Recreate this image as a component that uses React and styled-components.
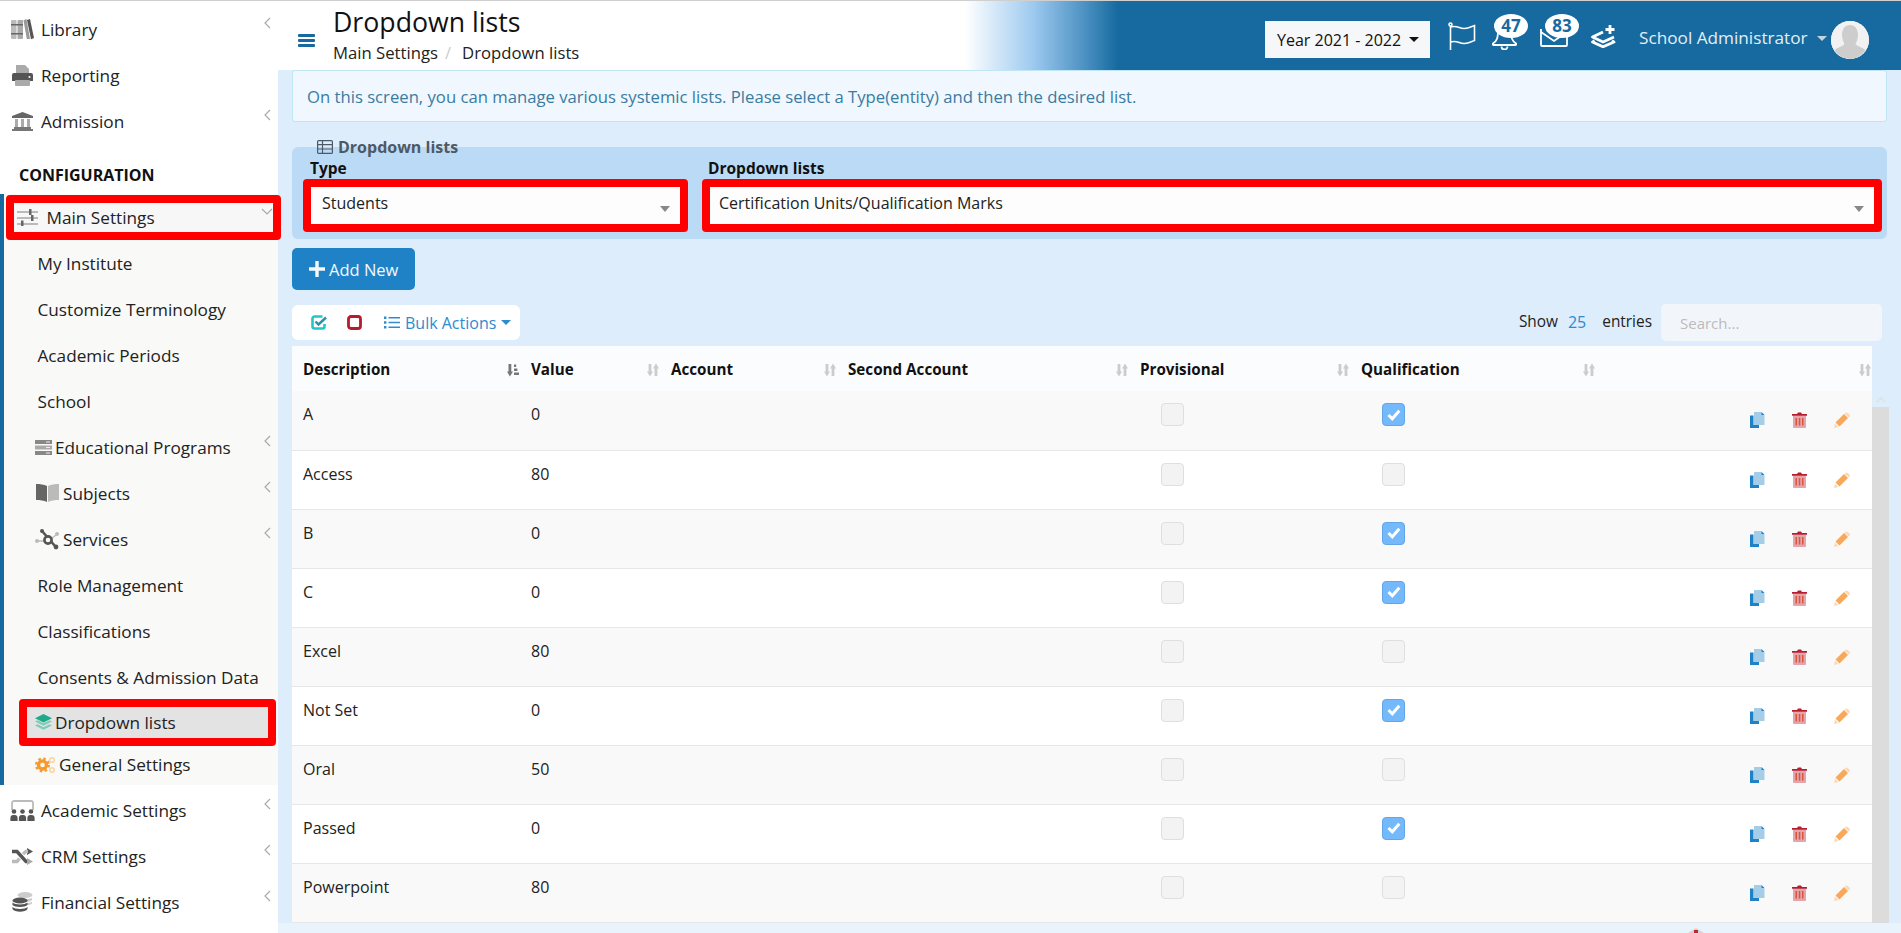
import React from 'react';
import styled, { createGlobalStyle } from 'styled-components';

const Global = createGlobalStyle`
  html, body { margin: 0; padding: 0; height: 933px; overflow: hidden; background: #fff; }
  body { font-family: "Open Sans", "Liberation Sans", sans-serif; font-size: 17px; color: #222; }
  * { box-sizing: border-box; }
`;

const Page = styled.div`
  display: grid; grid-template-columns: 278px 1fr; height: 933px; border-top: 1px solid #cfcfcf; overflow: hidden;
`;

/* ---------- sidebar ---------- */
const Sidebar = styled.aside`
  background: #fff; padding-top: 5px; display: flex; flex-direction: column; position: relative; z-index: 2;
`;
const NavRow = styled.div`
  position: relative; display: flex; align-items: center; flex: none;
  height: ${p => p.$h || 46}px; padding-left: ${p => p.$indent}px; color: #222; font-size: 17.2px; white-space: nowrap;
  background: ${p => p.$bg || 'transparent'};
  ${p => p.$mark && `
    &::after {
      content: ''; position: absolute; left: ${p.$mark[0]}px; right: ${p.$mark[1]}px; top: ${p.$mark[2]}px; bottom: ${p.$mark[3]}px;
      border: 8px solid #ff0000; border-radius: 4px; pointer-events: none; background: ${p.$fill || 'transparent'};
    }
  `}
`;
const IconSlot = styled.span`
  display: inline-flex; align-items: center; flex: none; width: ${p => p.$w}px; position: relative; z-index: 1;
`;
const NavLabel = styled.span`position: relative; z-index: 1;`;
const Chevron = styled.svg`
  position: absolute; right: 6px; top: ${p => p.$top || 11}px; width: 9px; height: 12px; fill: none; stroke: #aaa; stroke-width: 1.2;
`;
const ChevronWide = styled(Chevron)`width: 12px; right: 5px; z-index: 1;`;
const SectionTitle = styled.div`
  height: 50px; padding: 19px 0 0 19px; font-weight: 700; font-size: 16px; line-height: 24px; color: #111;
`;
const SubGroup = styled.div`
  border-left: 4px solid #166a9f; background: #f9f9f7; margin-bottom: 2px;
`;

/* ---------- main column ---------- */
const Main = styled.main`
  display: flex; flex-direction: column; min-width: 0; background: #deedfb;
`;
const Header = styled.header`
  height: 69px; flex: none; display: flex; align-items: stretch; padding-left: 20px;
  background: linear-gradient(90deg, #fff 0, #fff 687px, #9fcbf0 754px, #4f93c4 805px, #166a9f 840px);
`;
const Burger = styled.div`
  display: flex; flex-direction: column; justify-content: space-between; width: 17px; height: 13px; margin: 33px 18px 0 0; flex: none;
  span { display: block; height: 2.6px; background: #166a9f; border-radius: 1px; }
`;
const TitleBlock = styled.div`flex: 1; min-width: 0;`;
const PageTitle = styled.h1`
  margin: 3px 0 0; font-size: 26.7px; line-height: 36px; font-weight: 400; color: #111;
`;
const Crumbs = styled.div`
  display: flex; align-items: center; font-size: 16.7px; line-height: 24px; margin-top: 1px; color: #222;
  i { font-style: normal; color: #ccc; margin: 0 11px 0 7px; }
`;
const HeaderTools = styled.div`
  display: flex; align-items: flex-start; padding-right: 32px; position: relative; flex: none;
`;
const YearSelect = styled.div`
  margin-top: 20px; width: 165px; height: 37px; background: #f6f7f9; color: #111; font-size: 16px;
  display: flex; align-items: center; padding-left: 12px; gap: 8px; white-space: nowrap;
`;
const Caret = styled.span`
  display: inline-block; width: 0; height: 0; flex: none;
  border-left: ${p => p.$s || 5}px solid transparent; border-right: ${p => p.$s || 5}px solid transparent;
  border-top: ${p => p.$s || 5}px solid ${p => p.$c || '#111'};
`;
const ToolIcon = styled.div`
  position: relative; flex: none; margin-top: ${p => p.$top}px; margin-left: ${p => p.$left}px; width: ${p => p.$w}px; height: ${p => p.$h}px;
  svg { display: block; }
`;
const Badge = styled.span`
  position: absolute; left: ${p => p.$left}px; top: ${p => p.$top}px; width: 34px; height: 24px; border-radius: 50%;
  background: #fff; color: #166a9f; font-weight: 700; font-size: 17px; line-height: 24px; text-align: center;
`;
const UserName = styled.div`
  margin: 25px 0 0 22px; color: #e4eef5; font-size: 17.2px; line-height: 24px; white-space: nowrap; width: 171px; flex: none;
`;
const UserCaret = styled.div`display: flex; margin: 35px 4px 0 7px; flex: none;`;
const Avatar = styled.div`
  width: 38px; height: 38px; margin-top: 20px; border-radius: 50%; overflow: hidden; flex: none; background: #f0f0f0;
  svg { display: block; }
`;

const Content = styled.div`
  flex: 1; min-height: 0; padding: 0 14px;
`;
const Alert = styled.div`
  height: 52px; background: #f0f7fe; border: 1px solid #bfe6f2; border-radius: 3px; padding: 0 14px;
  display: flex; align-items: center; color: #3a7ba1; font-size: 16.68px; white-space: nowrap;
`;
const Panel = styled.section`
  position: relative; margin-top: 25px; height: 92px; background: #bbdaf5; border-radius: 6px;
  display: flex; gap: 30px; padding: 11px 13px 15px 19px;
`;
const Legend = styled.div`
  position: absolute; left: 25px; top: -12px; display: flex; align-items: center; gap: 5px;
  font-size: 16px; font-weight: 700; line-height: 24px; color: #4d5a66;
`;
const Field = styled.div`
  flex: ${p => p.$grow ? '1' : 'none'}; width: ${p => p.$w ? p.$w + 'px' : 'auto'};
  display: flex; flex-direction: column;
`;
const FieldLabel = styled.label`
  display: block; height: 20px; margin: 0 0 9px ${p => p.$shift}px; font-weight: 700; font-size: 15.5px; line-height: 20px; color: #111;
`;
const SelectBox = styled.div`
  position: relative; height: 37px; background: #fdfdfd; padding: 4px ${p => p.$pad}px; font-size: 16px; line-height: 24px; color: #222;
  &::before { content: ''; position: absolute; left: -8px; right: -8px; top: -8px; bottom: -8px; border: 8px solid #ff0000; border-radius: 4px; }
  &::after { content: ''; position: absolute; right: 10px; top: 19px; border-left: 5px solid transparent; border-right: 5px solid transparent; border-top: 6px solid #888; }
`;
const AddButton = styled.button`
  display: flex; align-items: center; gap: 4px; margin-top: 9px; width: 123px; height: 42px; padding: 0 0 0 17px;
  border: 0; border-radius: 5px; background: #1f82c7; color: #f4f8fb; font: inherit; font-size: 16.5px;
`;
const ToolRow = styled.div`
  display: flex; justify-content: space-between; align-items: center; margin-top: 14px; height: 37px; padding-right: 5px;
`;
const BulkBar = styled.div`
  width: 228px; height: 35px; background: #fff; border-radius: 6px; display: flex; align-items: center; padding-left: 19px;
`;
const BulkLabel = styled.span`
  display: inline-flex; align-items: center; gap: 5px; margin-left: 22px; color: #2d8bd0; font-size: 16px; white-space: nowrap;
`;
const BulkStop = styled.span`display: inline-flex; margin-left: 20px;`;
const Entries = styled.div`
  display: flex; align-items: center; font-size: 15.4px; color: #222;
`;
const EntryText = styled.span`margin-bottom: 2px;`;
const EntryCount = styled.span`color: #2d8bd0; margin: 0 16px 2px 10px; font-size: 16px;`;
const SearchBox = styled.div`
  width: 221px; height: 37px; margin-left: 9px; padding: 0 19px; background: #f2f6fa; border-radius: 5px;
  display: flex; align-items: center; color: #bbb; font-size: 15px;
`;
const TableRow = styled.div`
  display: flex; align-items: flex-start; margin-top: 5px; margin-right: -2px;
`;
const Table = styled.table`
  width: 1580px; flex: none; table-layout: fixed; border-collapse: collapse;
`;
const Th = styled.th`
  width: ${p => p.$w}px; height: 45px; padding: 0 1px 0 11px; background: #fbfcfe; text-align: left; vertical-align: middle;
`;
const ThInner = styled.div`
  display: flex; justify-content: space-between; align-items: center; font-size: 15.2px; font-weight: 700; color: #111;
  svg { flex: none; margin-top: 2px; }
`;
const Tr = styled.tr`
  background: ${p => p.$odd ? '#f9f9f9' : '#fff'};
`;
const Td = styled.td`
  height: 59px; padding: 11px; vertical-align: top; border-bottom: 1.5px solid #e7e7e7; font-size: 16px; line-height: 24px; color: #222;
`;
const CheckTd = styled(Td)`padding: 12px 0 0 32px;`;
const Check = styled.span`
  display: flex; align-items: center; justify-content: center; width: 23px; height: 23px; border-radius: 4px;
  background: ${p => p.$on ? '#74b9fb' : '#f3f3f3'}; border: 1px solid ${p => p.$on ? '#62a6e8' : '#dfdfdf'};
`;
const ActionTd = styled(Td)`padding: 21px 0 0 154px;`;
const Actions = styled.div`
  display: flex; align-items: flex-start; gap: 27px;
  svg { display: block; flex: none; }
`;
const ScrollTrack = styled.div`
  width: 17px; flex: none; margin-top: 45px; height: 532px; display: flex; flex-direction: column;
`;
const ScrollUp = styled.div`
  height: 16px; display: flex; align-items: center; justify-content: center;
`;
const ScrollThumb = styled.div`flex: 1; background: #dcdcdc;`;
const Strip = styled.div`
  position: relative; height: 10px; flex: none; background: #e9f3fb;
`;
const StripMark = styled.svg`
  position: absolute; left: 1410px; top: 5px; width: 16px; height: 5px;
`;

/* ---------- icons ---------- */
const Ic = ({ w, h, children, ...r }) => <svg width={w} height={h} viewBox={`0 0 ${w} ${h}`} {...r}>{children}</svg>;

const Library = () => (
  <Ic w={23} h={21}>
    <rect x="0" y="1" width="5.500" height="19" rx="1" fill="#bbb" />
    <rect x="6.500" y="1" width="5.500" height="19" rx="1" fill="#aaa" />
    <path d="M0 5h12v1.600H0zM0 14h12v1.600H0z" fill="#666" />
    <path d="M12.500 1.200L15.500 0l3.500 20h-3.200z" fill="#999" />
    <path d="M16 1l3-1 4 19-3 1.200z" fill="#555" />
  </Ic>
);
const Printer = () => (
  <Ic w={21} h={21}>
    <path d="M4 0h9l4 4v5H4z" fill="#aaa" />
    <path d="M2 8h17a2 2 0 0 1 2 2v6H0v-6a2 2 0 0 1 2-2z" fill="#555" />
    <rect x="3" y="15" width="15" height="6" rx="1" fill="#aaa" />
    <circle cx="17.500" cy="12" r="1" fill="#fff" />
  </Ic>
);
const Bank = () => (
  <Ic w={21} h={19}>
    <path d="M10.500 0L21 4v2H0V4z" fill="#666" />
    <path d="M3 7h3v8H3zM9 7h3v8H9zM15 7h3v8h-3z" fill="#aaa" />
    <path d="M2 15h17v2H2zM0 17h21v2H0z" fill="#777" />
  </Ic>
);
const Sliders = () => (
  <Ic w={21} h={17}>
    <path d="M0 2h21v2H0zM0 8h21v2H0zM0 14h21v2H0z" fill="#bbb" />
    <path d="M12 0h2.500v6H12zM14 6h2.500v6H14zM4 11.500h2.500v5.500H4z" fill="#666" />
  </Ic>
);
const Server = () => (
  <Ic w={17} h={15}>
    <rect y="0" width="17" height="4" fill="#888" /><rect y="5.500" width="17" height="4" fill="#aaa" /><rect y="11" width="17" height="4" fill="#888" />
    <path d="M11 1.500h4v1h-4zM11 7h4v1h-4zM11 12.500h4v1h-4z" fill="#eee" />
  </Ic>
);
const Book = () => (
  <Ic w={23} h={18}>
    <path d="M0 0c4 0 8 .5 11 2v16c-3-1.500-7-2-11-2z" fill="#666" />
    <path d="M12 2c3-1.500 7-2 11-2v16c-4 0-8 .5-11 2z" fill="#bbb" />
  </Ic>
);
const Services = () => (
  <Ic w={25} h={21}>
    <circle cx="2" cy="12" r="2" fill="#bbb" /><circle cx="22" cy="5" r="2" fill="#bbb" />
    <path d="M7 2l13 15" stroke="#555" strokeWidth="2.600" />
    <path d="M3 12h6M16 10l5-4" stroke="#bbb" strokeWidth="1.400" />
    <circle cx="7" cy="2" r="2" fill="#555" /><circle cx="21" cy="18" r="2.400" fill="#555" />
    <circle cx="13" cy="11" r="3.600" fill="#f9f9f7" stroke="#555" strokeWidth="2.600" />
  </Ic>
);
const Layers = () => (
  <Ic w={17} h={16}>
    <path d="M8.500 0L17 4.300 8.500 8.600 0 4.300z" fill="#1fa98a" />
    <path d="M0 7.500l2.500-1.200 6 3 6-3L17 7.500 8.500 11.800z" fill="#7ccdb8" />
    <path d="M0 11.500l2.500-1.200 6 3 6-3 2.500 1.200L8.500 15.800z" fill="#7ccdb8" />
  </Ic>
);
const Cogs = () => (
  <Ic w={21} h={17}>
    <circle cx="7.500" cy="9" r="4" fill="none" stroke="#f79a2e" strokeWidth="3.400" />
    <circle cx="7.500" cy="9" r="6.300" fill="none" stroke="#f79a2e" strokeWidth="2.400" strokeDasharray="2.500 2.450" />
    <circle cx="17" cy="4" r="2.300" fill="none" stroke="#fbd5a5" strokeWidth="1.600" />
    <circle cx="17" cy="14" r="2.300" fill="none" stroke="#fbd5a5" strokeWidth="1.600" />
  </Ic>
);
const Group = () => (
  <Ic w={25} h={21}>
    <path d="M2 10V3a2 2 0 0 1 2-2h17a2 2 0 0 1 2 2v7" fill="none" stroke="#bbb" strokeWidth="1.800" />
    {[4, 12.5, 21].map(x => (
      <g key={x} fill="#555">
        <circle cx={x} cy="11.500" r="2.300" /><path d={`M${x - 3.6} 21v-3a3 3 0 0 1 3-3h1.200a3 3 0 0 1 3 3v3z`} />
      </g>
    ))}
  </Ic>
);
const Shuffle = () => (
  <Ic w={21} h={17}>
    <path d="M0 3.500h5l9 10h2" fill="none" stroke="#555" strokeWidth="3.400" />
    <path d="M15 0l6 3.500-6 3.500z" fill="#555" />
    <path d="M0 13.500h5l2.500-3M11 6l3-2.500h2" fill="none" stroke="#bbb" strokeWidth="3.400" />
    <path d="M15 10l6 3.500-6 3.500z" fill="#aaa" />
  </Ic>
);
const Coins = () => (
  <Ic w={21} h={20}>
    <ellipse cx="13" cy="3" rx="7.500" ry="3" fill="#ccc" />
    <path d="M6 6c2 1.500 12 1.500 14 0v2c-1 1.200-4 2-7 2zM13 11c3 0 6-.5 7-1.500v2c-1 1-3 1.500-5 1.500z" fill="#ccc" />
    <ellipse cx="8" cy="8.500" rx="7.500" ry="3" fill="#555" />
    <path d="M.5 10.500c2 2.500 13 2.500 15 0v2.500c-2 2.500-13 2.500-15 0zM.5 15c2 2.500 13 2.500 15 0v2c-2 3.500-13 3.500-15 0z" fill="#555" />
  </Ic>
);

const ChevLeft = ({ top }) => <Chevron $top={top} viewBox="0 0 9 12"><path d="M7 1L2 6l5 5" /></Chevron>;
const ChevDown = () => <ChevronWide $top={11} viewBox="0 0 12 12"><path d="M1 4l5 5 5-5" /></ChevronWide>;

const Flag = () => (
  <Ic w={28} h={28} fill="none" stroke="#fff" strokeWidth="1.600">
    <circle cx="2.500" cy="2.500" r="1.500" />
    <path d="M2.500 4v24M2.500 5c7-2 9 2 14 1.500 4-.3 7-2 10-3v15c-3 1-6 2.700-10 3-5 .5-7-3.500-14-1.500" />
  </Ic>
);
const Bell = () => (
  <Ic w={25} h={22} fill="none" stroke="#fff" strokeWidth="1.800">
    <path d="M6 2C6 10 5 13 1 15.500c-.6.6-.2 1.500.8 1.500h21.400c1 0 1.400-.9.800-1.500C20 13 19 10 19 2" />
    <path d="M9.500 18.500a3 3 0 0 0 6 0" />
  </Ic>
);
const Envelope = () => (
  <Ic w={28} h={19} fill="none" stroke="#fff" strokeWidth="1.800">
    <path d="M1 1v16a1 1 0 0 0 1 1h24a1 1 0 0 0 1-1V1" />
    <path d="M1 4l13 9 13-9" />
  </Ic>
);
const LayersPlus = () => (
  <Ic w={26} h={23} fill="none" stroke="#fff" strokeWidth="2.800">
    <path d="M19 0v9M14.500 4.500h9" />
    <path d="M12 7L1.500 12 12 17l11-5" strokeLinejoin="round" />
    <path d="M3.500 15.500L1.500 17 12 21.800 23 17l-2-1.500" strokeLinejoin="round" />
  </Ic>
);
const Person = () => (
  <svg width="38" height="38" viewBox="0 0 38 38">
    <rect width="38" height="38" fill="#f2f2f2" />
    <path d="M19 4c5 0 8 4 8 10 0 4-1.500 7-2.500 9 2 2.500 7 3.500 10 6-3 5-9 9-15.500 9S6.500 34 3.500 29c3-2.500 8-3.500 10-6-1-2-2.500-5-2.500-9 0-6 3-10 8-10z" fill="#cdcdcd" />
  </svg>
);
const TableGlyph = () => (
  <Ic w={16} h={14} fill="none" stroke="#4d5a66" strokeWidth="1.200">
    <rect x=".6" y=".6" width="14.800" height="12.800" rx="1" />
    <path d="M.6 4.700h14.800M.6 9h14.800M5.500 .6v12.800" />
  </Ic>
);
const Plus = () => (
  <Ic w={16} h={16}><path d="M6.300 0h3.400v6.300H16v3.400H9.700V16H6.300V9.700H0V6.300h6.300z" fill="#f4f8fb" /></Ic>
);
const CheckSquare = () => (
  <Ic w={16} h={15} fill="none">
    <path d="M13.500 9v2.500a2 2 0 0 1-2 2h-8a2 2 0 0 1-2-2v-8a2 2 0 0 1 2-2h8" stroke="#26c6c6" strokeWidth="2.600" />
    <path d="M4.500 6.500l3 3L15 2.500" stroke="#2b8fb0" strokeWidth="2.400" />
  </Ic>
);
const StopSquare = () => (
  <Ic w={15} h={15} fill="none"><rect x="1.500" y="1.500" width="12" height="12" rx="2.500" stroke="#b71c2c" strokeWidth="2.800" /></Ic>
);
const ListGlyph = () => (
  <Ic w={16} h={13}>
    <path d="M0 .5h2.400v2.400H0zM0 5.300h2.400v2.400H0zM0 10.100h2.400v2.400H0z" fill="#2d8bd0" />
    <path d="M4.500 1h11.500v1.400H4.500zM4.500 5.800h11.500v1.400H4.500zM4.500 10.600h11.500v1.400H4.500z" fill="#2d8bd0" />
  </Ic>
);
const SortIdle = () => (
  <Ic w={12} h={14}>
    <path d="M1.600 1h2.800v7.500h1.600L3 13.500 0 8.500h1.600z" fill="#ccc" />
    <path d="M9 .5l3 5h-1.600V13H7.600V5.500H6z" fill="#ccc" />
  </Ic>
);
const SortActive = () => (
  <Ic w={12} h={14}>
    <path d="M1.500 1h2.800v7.500H6l-3.100 5-2.900-5h1.500z" fill="#777" />
    <path d="M7 1.500h2.200v2.600H7zM7 5.500h3.400v2.600H7zM7 9.500H12V12H7z" fill="#777" />
  </Ic>
);
const Tick = () => (
  <Ic w={14} h={12} fill="none"><path d="M1.500 6l3.800 3.800 7-8" stroke="#fff" strokeWidth="3" /></Ic>
);
const Copy = () => (
  <Ic w={15} h={16}>
    <path d="M0 3.500h3.500V13H9v3H0z" fill="#1f82c7" />
    <path d="M4 0h7l3.500 3.500V13H4z" fill="#a6cde8" />
    <path d="M11.500 0l3 3h-3z" fill="#1f82c7" />
  </Ic>
);
const Trash = () => (
  <Ic w={15} h={16}>
    <path d="M1 3.500h13V15a1 1 0 0 1-1 1H2a1 1 0 0 1-1-1z" fill="#e3a4aa" />
    <path d="M0 2h5l1-1.500h3L10 2h5v1.700H0z" fill="#b71c2c" />
    <path d="M3.500 6H5v7.500H3.500zM6.800 6h1.500v7.500H6.800zM10 6h1.500v7.500H10z" fill="#d9553f" />
  </Ic>
);
const Pencil = () => (
  <Ic w={16} h={16}>
    <path d="M1.500 10.500L10 2l4 4-8.500 8.500z" fill="#f9a85a" />
    <path d="M11 1.200a2 2 0 0 1 2.800-.2l1.400 1.300a2 2 0 0 1 .1 2.800L14.800 5.600 10.500 1.700zM1 11.500L4.500 15 0 16z" fill="#fcd9b4" />
  </Ic>
);

/* ---------- data ---------- */
const subItems = [
  { label: 'My Institute' }, { label: 'Customize Terminology' }, { label: 'Academic Periods' }, { label: 'School' },
  { label: 'Educational Programs', icon: <Server />, slot: 20, chevron: true, indent: 31 },
  { label: 'Subjects', icon: <Book />, slot: 27, chevron: true, indent: 32 },
  { label: 'Services', icon: <Services />, slot: 28, chevron: true, indent: 31 },
  { label: 'Role Management' }, { label: 'Classifications' }, { label: 'Consents & Admission Data' },
];
const cols = [228, 140, 177, 292, 221, 246, 276];
const heads = ['Description', 'Value', 'Account', 'Second Account', 'Provisional', 'Qualification', ''];
const rows = [
  ['A', '0', true], ['Access', '80', false], ['B', '0', true], ['C', '0', true], ['Excel', '80', false],
  ['Not Set', '0', true], ['Oral', '50', false], ['Passed', '0', true], ['Powerpoint', '80', false],
];

export default function App() {
  return (
    <>
      <Global />
      <Page>
        <Sidebar>
          <NavRow $indent={11}><IconSlot $w={30}><Library /></IconSlot><NavLabel>Library</NavLabel><ChevLeft /></NavRow>
          <NavRow $indent={12}><IconSlot $w={29}><Printer /></IconSlot><NavLabel>Reporting</NavLabel></NavRow>
          <NavRow $indent={12}><IconSlot $w={29}><Bank /></IconSlot><NavLabel>Admission</NavLabel><ChevLeft /></NavRow>
          <SectionTitle>CONFIGURATION</SectionTitle>
          <SubGroup>
            <NavRow $indent={13} $h={46} $mark={[2, -3, 1, 0]} $fill="#f7f7f7">
              <IconSlot $w={29.500}><Sliders /></IconSlot><NavLabel>Main Settings</NavLabel><ChevDown />
            </NavRow>
            {subItems.map(it => (
              <NavRow key={it.label} $indent={it.indent || 33.500} $h={it.h}>
                {it.icon && <IconSlot $w={it.slot}>{it.icon}</IconSlot>}
                <NavLabel>{it.label}</NavLabel>
                {it.chevron && <ChevLeft />}
              </NavRow>
            ))}
            <NavRow $indent={31} $h={44} $mark={[15, 2, -1, -2]} $fill="#e3e3e3">
              <IconSlot $w={20}><Layers /></IconSlot><NavLabel>Dropdown lists</NavLabel>
            </NavRow>
            <NavRow $indent={31} $h={41}>
              <IconSlot $w={24}><Cogs /></IconSlot><NavLabel>General Settings</NavLabel>
            </NavRow>
          </SubGroup>
          <NavRow $indent={10}><IconSlot $w={31}><Group /></IconSlot><NavLabel>Academic Settings</NavLabel><ChevLeft /></NavRow>
          <NavRow $indent={12}><IconSlot $w={29}><Shuffle /></IconSlot><NavLabel>CRM Settings</NavLabel><ChevLeft /></NavRow>
          <NavRow $indent={12}><IconSlot $w={29}><Coins /></IconSlot><NavLabel>Financial Settings</NavLabel><ChevLeft /></NavRow>
        </Sidebar>

        <Main>
          <Header>
            <Burger><span /><span /><span /></Burger>
            <TitleBlock>
              <PageTitle>Dropdown lists</PageTitle>
              <Crumbs>Main Settings<i>/</i>Dropdown lists</Crumbs>
            </TitleBlock>
            <HeaderTools>
              <YearSelect>Year 2021 - 2022<Caret /></YearSelect>
              <ToolIcon $top={21} $left={18} $w={28} $h={28}><Flag /></ToolIcon>
              <ToolIcon $top={27} $left={16} $w={25} $h={22}><Bell /><Badge $left={2} $top={-14}>47</Badge></ToolIcon>
              <ToolIcon $top={27} $left={23} $w={28} $h={19}><Envelope /><Badge $left={5} $top={-14}>83</Badge></ToolIcon>
              <ToolIcon $top={24} $left={23} $w={26} $h={23}><LayersPlus /></ToolIcon>
              <UserName>School Administrator</UserName>
              <UserCaret><Caret $c="#c5d3de" /></UserCaret>
              <Avatar><Person /></Avatar>
            </HeaderTools>
          </Header>

          <Content>
            <Alert>On this screen, you can manage various systemic lists. Please select a Type(entity) and then the desired list.</Alert>
            <Panel>
              <Legend><TableGlyph />Dropdown lists</Legend>
              <Field $w={369}>
                <FieldLabel $shift={-1}>Type</FieldLabel>
                <SelectBox $pad={11}>Students</SelectBox>
              </Field>
              <Field $grow>
                <FieldLabel $shift={-2}>Dropdown lists</FieldLabel>
                <SelectBox $pad={9}>Certification Units/Qualification Marks</SelectBox>
              </Field>
            </Panel>
            <AddButton><Plus />Add New</AddButton>
            <ToolRow>
              <BulkBar>
                <CheckSquare />
                <BulkStop><StopSquare /></BulkStop>
                <BulkLabel><ListGlyph />Bulk Actions<Caret $c="#2d8bd0" /></BulkLabel>
              </BulkBar>
              <Entries>
                <EntryText>Show</EntryText><EntryCount>25</EntryCount><EntryText>entries</EntryText>
                <SearchBox>Search...</SearchBox>
              </Entries>
            </ToolRow>
            <TableRow>
              <Table>
                <thead>
                  <tr>
                    {heads.map((h, i) => (
                      <Th key={i} $w={cols[i]}><ThInner><span>{h}</span>{i === 0 ? <SortActive /> : <SortIdle />}</ThInner></Th>
                    ))}
                  </tr>
                </thead>
                <tbody>
                  {rows.map(([d, v, q], i) => (
                    <Tr key={d} $odd={i % 2 === 0}>
                      <Td>{d}</Td>
                      <Td>{v}</Td>
                      <Td />
                      <Td />
                      <CheckTd><Check /></CheckTd>
                      <CheckTd><Check $on={q}>{q && <Tick />}</Check></CheckTd>
                      <ActionTd><Actions><Copy /><Trash /><Pencil /></Actions></ActionTd>
                    </Tr>
                  ))}
                </tbody>
              </Table>
              <ScrollTrack>
                <ScrollUp>
                  <svg width="12" height="7" viewBox="0 0 12 7" fill="none"><path d="M2 6l4-4 4 4" stroke="#dfe3e6" strokeWidth="2" /></svg>
                </ScrollUp>
                <ScrollThumb />
              </ScrollTrack>
            </TableRow>
          </Content>
          <Strip>
            <StripMark viewBox="0 0 16 5">
              <path d="M0 5L8 0l8 5z" fill="#d5d5d5" /><rect x="6" y="2" width="4" height="3" fill="#c8202c" />
            </StripMark>
          </Strip>
        </Main>
      </Page>
    </>
  );
}
